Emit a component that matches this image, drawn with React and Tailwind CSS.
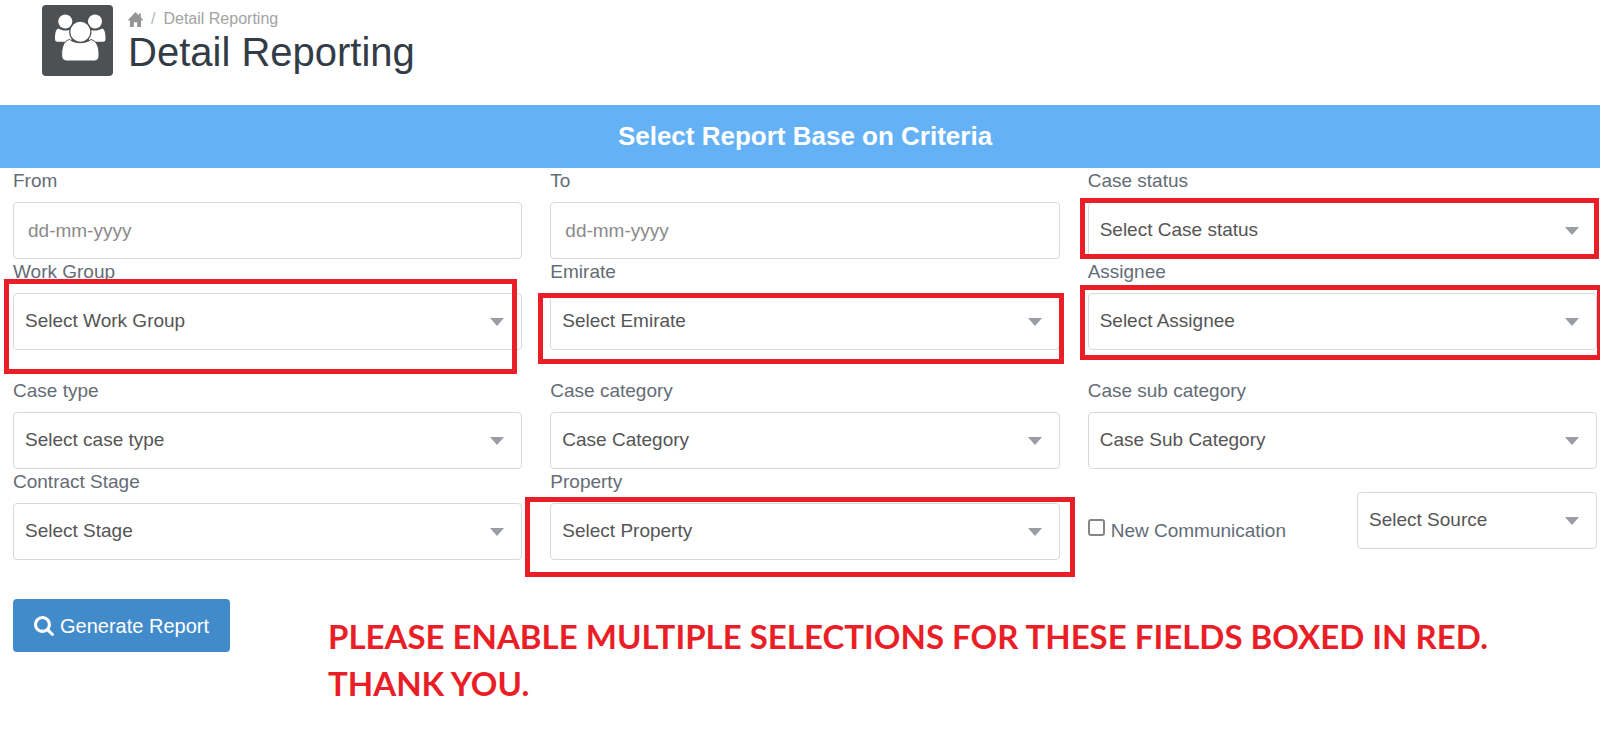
import React from "react";

const controlBase =
  "block h-[57px] w-full rounded border border-[#d8d9db] bg-white text-[19px]";

function Label({ htmlFor, children }) {
  return (
    <label
      htmlFor={htmlFor}
      className="mb-2 block text-[19px] leading-[26px] text-[#646c76]"
    >
      {children}
    </label>
  );
}

function Select({ id, text, mark, label }) {
  return (
    <div className="relative">
      <select
        id={id}
        aria-label={label}
        className={`${controlBase} appearance-none pr-10 pl-[11px] text-[#555]`}
      >
        <option>{text}</option>
      </select>
      <svg
        viewBox="0 0 14 8"
        className="pointer-events-none absolute top-[25px] right-[18px] h-2 w-3.5 fill-[#9a9da4]"
        aria-hidden="true"
      >
        <path d="M0 0h14L7 8z" />
      </svg>
      {mark && (
        <div
          className={`pointer-events-none absolute z-10 border-5 border-[#ea1e26] ${mark}`}
        />
      )}
    </div>
  );
}

function SelectField({ id, label, text, mark }) {
  return (
    <div>
      <Label htmlFor={id}>{label}</Label>
      <Select id={id} text={text} mark={mark} />
    </div>
  );
}

function DateField({ id, label }) {
  return (
    <div>
      <Label htmlFor={id}>{label}</Label>
      <input
        id={id}
        type="text"
        placeholder="dd-mm-yyyy"
        className={`${controlBase} px-3.5 text-[#555] placeholder:text-[#8b8b8b]`}
      />
    </div>
  );
}

function GroupIcon() {
  return (
    <svg viewBox="0 0 71 71" className="size-[71px] shrink-0" aria-hidden="true">
      <rect width="71" height="71" rx="4" fill="#4d5154" />
      <g fill="#fff">
        <circle cx="23.3" cy="16.5" r="7" />
        <circle cx="53" cy="16.5" r="7" />
        <path d="M16.5 23.500c4 2.500 9 2.800 13 .5V36.700H15.500c-1.800 0-2.500-1-2.500-3 0-4.500 .5-9.500 3.500-10.200z" />
        <path d="M60 23.500c-4 2.500-9 2.800-13 .5V36.700H61c1.800 0 2.500-1 2.500-3 0-4.500-.5-9.500-3.500-10.200z" />
        <path
          d="M27.500 34.500c6 4.300 15.500 4.300 21.500 0 6 1.500 8.200 8 8 15.500 0 4-2 6-5.800 6H25.500c-3.800 0-5.800-2-5.800-6-.2-7.500 1.800-14 7.800-15.500z"
          stroke="#4d5154"
          strokeWidth="1"
        />
        <circle cx="38.300" cy="26.700" r="10.600" stroke="#4d5154" strokeWidth="1.200" />
      </g>
    </svg>
  );
}

function HomeIcon() {
  return (
    <svg viewBox="0 0 15 15" className="size-[15px]" fill="currentColor" aria-hidden="true">
      <path d="M7.500 0L10.800 3.500V1.500H12.800V5.600L15 8V8.500H13V15H9.200V10.200H5.800V15H2V8.500H0V8z" />
    </svg>
  );
}

function SearchIcon() {
  return (
    <svg viewBox="0 0 1664 1664" className="size-5" fill="currentColor" aria-hidden="true">
      <path d="M1152 704q0-185-131.500-316.500T704 256 387.500 387.500 256 704t131.500 316.500T704 1152t316.500-131.500T1152 704zm512 832q0 52-38 90t-90 38q-54 0-90-38l-343-342q-179 124-399 124-143 0-273.500-55.500t-225-150-150-225T0 704t55.500-273.500 150-225 225-150T704 0t273.500 55.500 225 150 150 225T1408 704q0 220-124 399l343 343q37 37 37 90z" />
    </svg>
  );
}

export default function App() {
  return (
    <main className="min-h-screen overflow-hidden bg-white font-['Liberation_Sans',Arial,sans-serif]">
      <header className="flex h-[105px] items-start gap-[15px] pt-[5px] pl-[42px]">
        <GroupIcon />
        <div>
          <nav
            aria-label="Breadcrumb"
            className="flex h-7 items-center text-base text-[#a3a3a3]"
          >
            <a href="#home" aria-label="Home" className="text-[#949494]">
              <HomeIcon />
            </a>
            <span className="mx-2 text-[#b5b5b5]">/</span>
            <a href="#detail-reporting">Detail Reporting</a>
          </nav>
          <h1 className="text-[40px] leading-[38px] text-[#323c47]">Detail Reporting</h1>
        </div>
      </header>

      <h2 className="flex h-[63px] items-center justify-center bg-[#64b2f5] pl-2.5 text-[26px] font-bold text-white">
        Select Report Base on Criteria
      </h2>

      <form className="pr-[3px] pl-[13px]" onSubmit={(e) => e.preventDefault()}>
        <div className="grid grid-cols-3 gap-x-7">
          <DateField id="from" label="From" />
          <DateField id="to" label="To" />
          <SelectField
            id="status"
            label="Case status"
            text="Select Case status"
            mark="-top-1 -right-0.5 bottom-0 -left-2"
          />
          <SelectField
            id="work-group"
            label="Work Group"
            text="Select Work Group"
            mark="-top-3.5 right-[5px] -bottom-6 -left-[9px]"
          />
          <SelectField
            id="emirate"
            label="Emirate"
            text="Select Emirate"
            mark="top-0 -right-1 -bottom-3.5 -left-3"
          />
          <SelectField
            id="assignee"
            label="Assignee"
            text="Select Assignee"
            mark="-top-2 -right-[5px] -bottom-2.5 -left-2"
          />
        </div>

        <div className="mt-7 grid grid-cols-3 gap-x-7">
          <SelectField id="case-type" label="Case type" text="Select case type" />
          <SelectField id="category" label="Case category" text="Case Category" />
          <SelectField
            id="sub-category"
            label="Case sub category"
            text="Case Sub Category"
          />
          <SelectField id="stage" label="Contract Stage" text="Select Stage" />
          <SelectField
            id="property"
            label="Property"
            text="Select Property"
            mark="-top-1.5 -right-[15px] -bottom-[17px] -left-[25px]"
          />
          <div className="flex items-start justify-between pt-[23px]">
            <div className="flex pt-[26px]">
              <input
                id="new-communication"
                type="checkbox"
                className="mt-px size-[17px] appearance-none rounded-[3px] border-2 border-[#858585] bg-white checked:bg-[#428bca]"
              />
              <label
                htmlFor="new-communication"
                className="pl-1.5 text-[19px] leading-[26px] text-[#646c76]"
              >
                New Communication
              </label>
            </div>
            <div className="w-60">
              <Select id="source" text="Select Source" label="Source" />
            </div>
          </div>
        </div>

        <div className="flex items-start gap-[98px] pt-[39px]">
          <button
            type="submit"
            className="flex h-[53px] shrink-0 items-center gap-1.5 rounded bg-[#428bca] px-[21px] text-xl text-white"
          >
            <SearchIcon />
            Generate Report
          </button>
          <p className="pt-3.5 font-['Lato',sans-serif] text-[33px] leading-[47px] font-bold text-[#ea1e26]">
            PLEASE ENABLE MULTIPLE SELECTIONS FOR THESE FIELDS BOXED IN RED.
            <br />
            THANK YOU.
          </p>
        </div>
      </form>
    </main>
  );
}
